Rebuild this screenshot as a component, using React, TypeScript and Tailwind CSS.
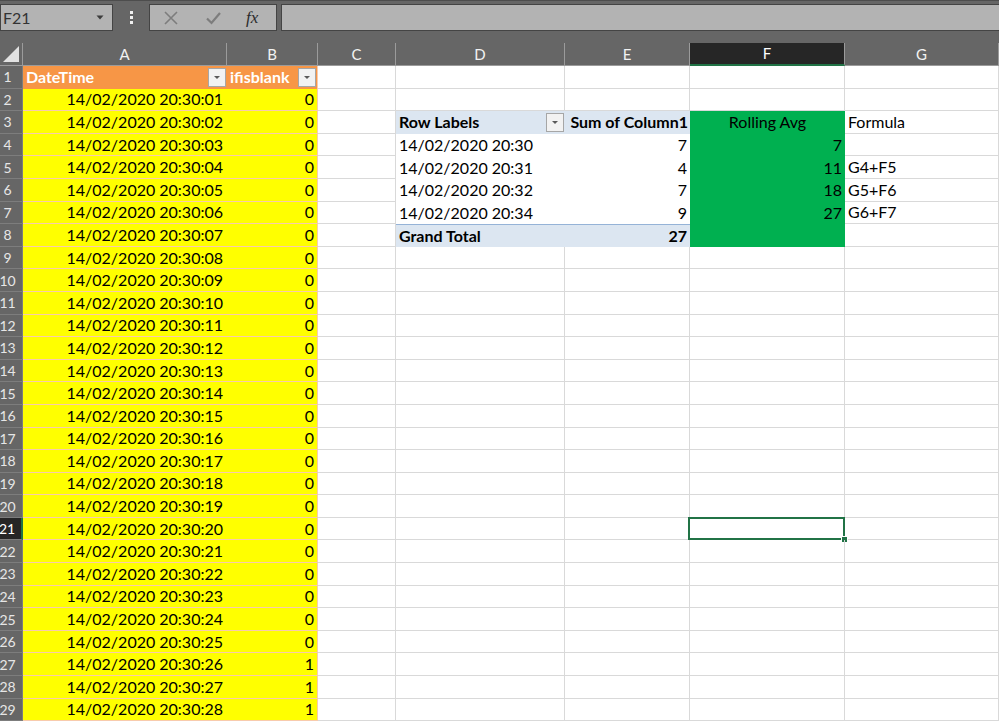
import React from "react";

const FONT = { fontFamily: "Lato, 'Open Sans', sans-serif" };

const W = {
  rh: "w-[23px]",
  A: "w-[204px]",
  B: "w-[91px]",
  C: "w-[78px]",
  D: "w-[169px]",
  E: "w-[125px]",
  F: "w-[155px]",
  G: "flex-1",
};

const LETTERS = ["A", "B", "C", "D", "E", "F", "G"] as const;

const pivot: Record<number, [string, string, string, string]> = {
  4: ["14/02/2020 20:30", "7", "7", ""],
  5: ["14/02/2020 20:31", "4", "11", "G4+F5"],
  6: ["14/02/2020 20:32", "7", "18", "G5+F6"],
  7: ["14/02/2020 20:34", "9", "27", "G6+F7"],
};

function FilterBtn() {
  return (
    <div className="ml-auto flex h-[19px] w-[18px] shrink-0 items-center justify-center border border-[#a6a6a6] bg-[#f2f2f2]">
      <svg width="8" height="5" viewBox="0 0 8 5">
        <path d="M1 1h6L4 4z" fill="#5a5a5a" />
      </svg>
    </div>
  );
}

function TopBar() {
  return (
    <div className="flex h-[43px] border-t border-[#4d4d4d] bg-[#666666]">
      <div className="mt-[3px] flex h-[27px] w-[113px] items-center border border-[#444] bg-[#b3b3b3] pl-[2px] pr-[8px] text-[16px] text-[#333]">
        <span>F21</span>
        <svg className="ml-auto" width="8" height="5" viewBox="0 0 8 5">
          <path d="M0.5 0.5h7L4 4.5z" fill="#3d3d3d" />
        </svg>
      </div>
      <div className="flex w-[36px] flex-col items-center gap-[2px] pt-[10px]">
        <div className="h-[3px] w-[3px] bg-[#f0f0f0]" />
        <div className="h-[3px] w-[3px] bg-[#f0f0f0]" />
        <div className="h-[3px] w-[3px] bg-[#f0f0f0]" />
      </div>
      <div className="mt-[3px] flex h-[27px] w-[128px] items-center border border-[#444] bg-[#b3b3b3]">
        <svg className="ml-[13px]" width="16" height="16" viewBox="0 0 16 16">
          <path d="M2 2l12 12M14 2L2 14" stroke="#7d7d7d" strokeWidth="1.6" />
        </svg>
        <svg className="ml-[26px]" width="17" height="16" viewBox="0 0 17 16">
          <path d="M2 8.5l4.5 4.5L15 3" stroke="#7d7d7d" strokeWidth="2.2" fill="none" />
        </svg>
        <span className="ml-[24px] text-[17px] italic text-[#2b2b2b]" style={{ fontFamily: "'Liberation Serif', serif" }}>
          fx
        </span>
      </div>
      <div className="ml-[4px] mt-[3px] h-[27px] flex-1 border-y border-l border-[#444] bg-[#b3b3b3]" />
    </div>
  );
}

function HeaderRow() {
  return (
    <div className="flex h-[23px] text-[15px]">
      <div className={`${W.rh} relative border-b border-r border-[#9b9b9b] bg-[#666666]`}>
        <svg className="absolute left-[2px] top-[2px]" width="18" height="18" viewBox="0 0 18 18">
          <path d="M1 17H17V1z" fill="#e2e2e2" />
        </svg>
      </div>
      {LETTERS.map((l) => {
        const sel = l === "F";
        return (
          <div
            key={l}
            className={`${W[l]} flex items-center justify-center ${
              sel
                ? "border-b-2 border-r border-b-[#217346] border-r-[#9b9b9b] bg-[#262626] text-white"
                : "border-b border-r border-[#9b9b9b] bg-[#666666] text-[#f2f2f2]"
            }`}
          >
            {l}
          </div>
        );
      })}
    </div>
  );
}

function Row({ r }: { r: number }) {
  const sel = r === 21;
  const table = r >= 2;
  const pv = pivot[r];
  const secs = String(r - 1).padStart(2, "0");
  const grid = "border-b border-r border-[#d9d9d9]";

  return (
    <div className="flex h-[22.6px] text-[16px] text-black">
      <div
        className={`${W.rh} flex items-center justify-center pr-[7px] text-[14px] ${
          sel
            ? "border-b border-r-2 border-b-[#7d7d7d] border-r-[#217346] bg-[#262626] text-white"
            : "border-b border-r border-[#7d7d7d] bg-[#666666] text-[#e6e6e6]"
        }`}
      >
        {r}
      </div>

      {/* A + B : table */}
      {r === 1 ? (
        <>
          <div className={`${W.A} flex items-center bg-[#f79646] pl-[3px] pr-[1px] font-bold text-white`}>
            <span>DateTime</span>
            <FilterBtn />
          </div>
          <div className={`${W.B} flex items-center border-r border-[#f8cbad] bg-[#f79646] pl-[3px] pr-[1px] font-bold text-white`}>
            <span>ifisblank</span>
            <FilterBtn />
          </div>
        </>
      ) : (
        table && (
          <>
            <div className={`${W.A} flex items-center justify-end border-b border-[#f8cbad] bg-[#ffff00] pr-[4px]`}>
              14/02/2020 20:30:{secs}
            </div>
            <div className={`${W.B} flex items-center justify-end border-b border-r border-[#f8cbad] bg-[#ffff00] pr-[3px]`}>
              {r >= 27 ? 1 : 0}
            </div>
          </>
        )
      )}

      <div className={`${W.C} ${grid}`} />

      {/* D, E, F, G */}
      {r === 3 ? (
        <>
          <div className={`${W.D} flex items-center bg-[#dce6f1] pl-[3px] pr-[1px] font-bold`}>
            <span>Row Labels</span>
            <FilterBtn />
          </div>
          <div className={`${W.E} flex items-center justify-end bg-[#dce6f1] pr-[2px] font-bold`}>Sum of Column1</div>
          <div className={`${W.F} flex items-center justify-center bg-[#00b050]`}>Rolling Avg</div>
          <div className={`${W.G} ${grid} flex items-center pl-[3px]`}>Formula</div>
        </>
      ) : pv ? (
        <>
          <div className={`${W.D} flex items-center bg-white pl-[3px]`}>{pv[0]}</div>
          <div className={`${W.E} flex items-center justify-end bg-white pr-[3px]`}>{pv[1]}</div>
          <div className={`${W.F} flex items-center justify-end bg-[#00b050] pr-[3px]`}>{pv[2]}</div>
          <div className={`${W.G} ${grid} flex items-center pl-[3px]`}>{pv[3]}</div>
        </>
      ) : r === 8 ? (
        <>
          <div className={`${W.D} flex items-center border-t border-[#95b3d7] bg-[#dce6f1] pl-[3px] font-bold`}>Grand Total</div>
          <div className={`${W.E} flex items-center justify-end border-t border-[#95b3d7] bg-[#dce6f1] pr-[3px] font-bold`}>27</div>
          <div className={`${W.F} bg-[#00b050]`} />
          <div className={`${W.G} ${grid}`} />
        </>
      ) : (
        <>
          <div className={`${W.D} ${grid}`} />
          <div className={`${W.E} ${grid}`} />
          <div className={`${W.F} ${grid} relative`}>
            {sel && (
              <div className="absolute -bottom-[1px] -left-[2px] -right-[1px] -top-[1px] border-2 border-[#217346]">
                <div className="absolute -bottom-[5px] -right-[5px] h-[7px] w-[7px] border border-white bg-[#217346]" />
              </div>
            )}
          </div>
          <div className={`${W.G} ${grid}`} />
        </>
      )}
    </div>
  );
}

export default function App() {
  const rows = Array.from({ length: 29 }, (_, i) => i + 1);
  return (
    <div className="h-[722px] w-[999px] overflow-hidden bg-white" style={FONT}>
      <TopBar />
      <HeaderRow />
      {rows.map((r) => (
        <Row key={r} r={r} />
      ))}
    </div>
  );
}
